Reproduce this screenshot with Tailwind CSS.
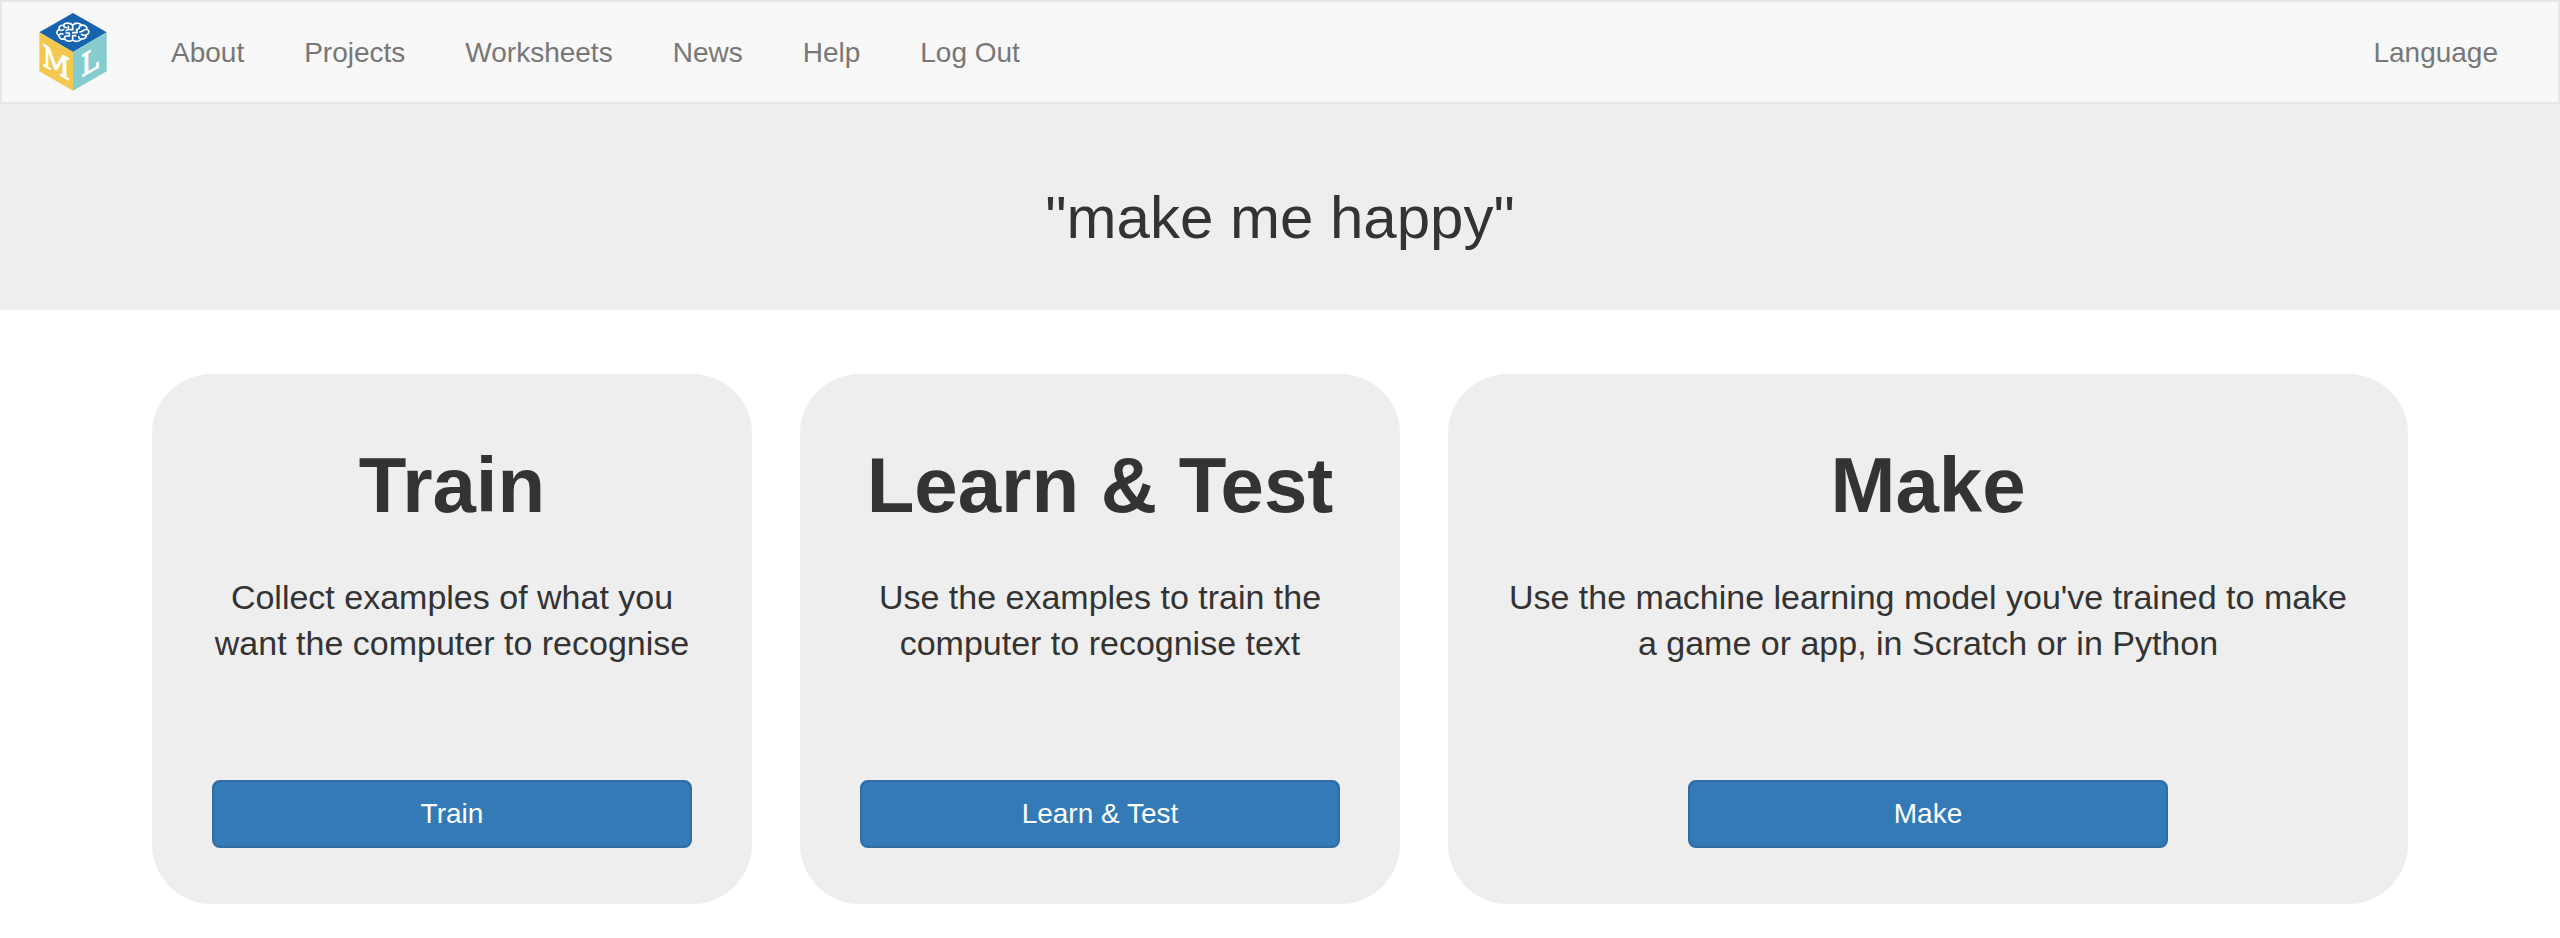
<!DOCTYPE html>
<html lang="en">
<head>
<meta charset="utf-8">
<meta name="viewport" content="width=device-width, initial-scale=1">
<title>Machine Learning for Kids</title>
<script src="https://cdn.jsdelivr.net/npm/@tailwindcss/browser@4"></script>
</head>
<body class="bg-white font-['Liberation_Sans',Arial,sans-serif] text-[#333]">
<nav class="flex items-center border-2 border-[#e7e7e7] bg-[#f8f8f8] pr-[30px] pl-9 text-[28px] leading-[42px] text-[#777]">
  <a href="#" aria-label="Home" class="my-[10px] mr-[33px] block">
    <svg class="h-20 w-[70px]" viewBox="113 36 210 240" aria-hidden="true">
      <path fill="#1863ad" d="M218 39 319 97 218 156 117 97z"/>
      <path fill="#f3c84f" d="M117 97 218 156V272L117 214z"/>
      <path fill="#84cccd" d="M319 97 218 156V272L319 214z"/>
      <g fill="none" stroke="#fff" stroke-width="5" stroke-linecap="round" stroke-linejoin="round">
        <path d="M217 76C210 67 193 68 190 75 179 75 174 82 177 88 168 92 167 102 175 106 175 114 184 119 192 117 199 125 212 125 217 120 223 126 239 125 243 117 253 118 260 111 258 105 268 101 268 91 260 88 261 79 251 73 243 76 240 68 224 67 217 76z"/>
        <path d="M217 77V89H207M217 120V107H226M190 76Q190 83 198 83M177 89Q184 93 190 89M176 106Q181 99 188 102M193 117Q191 108 199 108H207V99H197M243 77Q236 77 237 85L228 89M260 89Q251 87 248 93L239 96M258 105Q249 108 244 103M243 117Q236 118 235 110M204 79V88L198 92M217 98H230V90"/>
      </g>
      <g fill="#fff" stroke="#fff" stroke-width="3" font-family="'DejaVu Serif Condensed','DejaVu Serif',serif" font-size="90" text-anchor="middle">
        <text transform="translate(167 219) skewY(30)">M</text>
        <text transform="translate(269 217) skewY(-30)">L</text>
      </g>
    </svg>
  </a>
  <a href="#" class="px-[30px] pt-0.5">About</a>
  <a href="#" class="px-[30px] pt-0.5">Projects</a>
  <a href="#" class="px-[30px] pt-0.5">Worksheets</a>
  <a href="#" class="px-[30px] pt-0.5">News</a>
  <a href="#" class="px-[30px] pt-0.5">Help</a>
  <a href="#" class="px-[30px] pt-0.5">Log Out</a>
  <a href="#" class="ml-auto px-[30px] pt-0.5">Language</a>
</nav>
<header class="bg-[#eee] px-8 pt-[79px] pb-[57px] text-center">
  <h1 class="text-[60px] leading-[70px]">"make me happy"</h1>
</header>
<main class="mx-[152px] my-16 grid grid-cols-[5fr_5fr_8fr] gap-12 text-center">
  <section class="flex flex-col items-center rounded-[60px] bg-[#eee] px-[60px] pt-[65px] pb-14">
    <h2 class="text-[78px] leading-[92px] font-bold">Train</h2>
    <p class="mt-[43px] mb-auto text-[34px] leading-[46px]">Collect examples of what you want the computer to recognise</p>
    <button type="button" class="mt-[114px] h-[68px] w-full max-w-[480px] rounded-lg border-2 border-[#2e6da4] bg-[#337ab7] text-[28px] leading-10 text-white">Train</button>
  </section>
  <section class="flex flex-col items-center rounded-[60px] bg-[#eee] px-[60px] pt-[65px] pb-14">
    <h2 class="text-[78px] leading-[92px] font-bold">Learn &amp; Test</h2>
    <p class="mt-[43px] mb-auto text-[34px] leading-[46px]">Use the examples to train the computer to recognise text</p>
    <button type="button" class="mt-[114px] h-[68px] w-full max-w-[480px] rounded-lg border-2 border-[#2e6da4] bg-[#337ab7] text-[28px] leading-10 text-white">Learn &amp; Test</button>
  </section>
  <section class="flex flex-col items-center rounded-[60px] bg-[#eee] px-[60px] pt-[65px] pb-14">
    <h2 class="text-[78px] leading-[92px] font-bold">Make</h2>
    <p class="mt-[43px] mb-auto text-[34px] leading-[46px]">Use the machine learning model you've trained to make a game or app, in Scratch or in Python</p>
    <button type="button" class="mt-[114px] h-[68px] w-full max-w-[480px] rounded-lg border-2 border-[#2e6da4] bg-[#337ab7] text-[28px] leading-10 text-white">Make</button>
  </section>
</main>
</body>
</html>
